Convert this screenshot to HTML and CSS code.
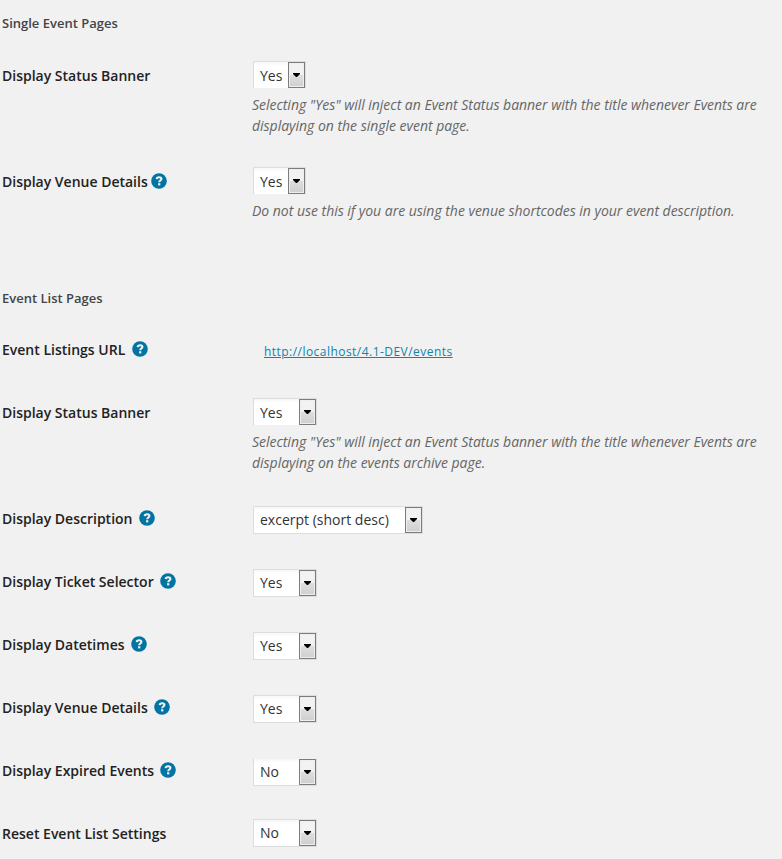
FILE: index.html
```html
<!DOCTYPE html>
<html lang="en">
<head>
<meta charset="utf-8">
<title>Event Settings</title>
<link rel="stylesheet" href="styles.css">
</head>
<body>
<svg class="defs" width="0" height="0" aria-hidden="true">
  <symbol id="help" viewBox="0 0 16 16">
    <circle cx="8" cy="8" r="7.8" fill="#0074a2"/>
    <path d="M5.7 6.1C5.8 4.7 6.7 4.2 8.1 4.2c1.5 0 2.3.6 2.3 1.7 0 1.6-2.2 1.6-2.2 3.3" fill="none" stroke="#f1f1f1" stroke-width="2.1"/>
    <rect x="7.1" y="10.2" width="2.2" height="2.2" fill="#f1f1f1"/>
  </symbol>
  <symbol id="arrow" viewBox="0 0 7 4"><path d="M0 0h7v1L4 4H3L0 1z" fill="#000"/></symbol>
</svg>
<main>
  <h4>Single Event Pages</h4>
  <section class="single">
    <div class="row described">
      <div class="label">Display Status Banner</div>
      <div class="field"><div class="select narrow open-bottom"><span>Yes</span><b><svg><use href="#arrow"/></svg></b></div>
        <p>Selecting "Yes" will inject an Event Status banner with the title whenever Events are<br>displaying on the single event page.</p></div>
    </div>
    <div class="row described">
      <div class="label tight">Display Venue Details<svg class="help"><use href="#help"/></svg></div>
      <div class="field"><div class="select narrow open-bottom"><span>Yes</span><b><svg><use href="#arrow"/></svg></b></div>
        <p>Do not use this if you are using the venue shortcodes in your event description.</p></div>
    </div>
  </section>
  <h4>Event List Pages</h4>
  <section class="list">
    <div class="row url">
      <div class="label">Event Listings URL<svg class="help"><use href="#help"/></svg></div>
      <div class="field"><a href="#">http://localhost/4.1-DEV/events</a></div>
    </div>
    <div class="row described tall">
      <div class="label">Display Status Banner</div>
      <div class="field"><div class="select open-bottom"><span>Yes</span><b><svg><use href="#arrow"/></svg></b></div>
        <p>Selecting "Yes" will inject an Event Status banner with the title whenever Events are<br>displaying on the events archive page.</p></div>
    </div>
    <div class="row">
      <div class="label">Display Description<svg class="help"><use href="#help"/></svg></div>
      <div class="field"><div class="select wide"><span>excerpt (short desc)</span><b><svg><use href="#arrow"/></svg></b></div></div>
    </div>
    <div class="row">
      <div class="label">Display Ticket Selector<svg class="help"><use href="#help"/></svg></div>
      <div class="field"><div class="select"><span>Yes</span><b><svg><use href="#arrow"/></svg></b></div></div>
    </div>
    <div class="row">
      <div class="label">Display Datetimes<svg class="help"><use href="#help"/></svg></div>
      <div class="field"><div class="select"><span>Yes</span><b><svg><use href="#arrow"/></svg></b></div></div>
    </div>
    <div class="row">
      <div class="label">Display Venue Details<svg class="help"><use href="#help"/></svg></div>
      <div class="field"><div class="select"><span>Yes</span><b><svg><use href="#arrow"/></svg></b></div></div>
    </div>
    <div class="row expired">
      <div class="label">Display Expired Events<svg class="help"><use href="#help"/></svg></div>
      <div class="field"><div class="select open-top"><span>No</span><b><svg><use href="#arrow"/></svg></b></div></div>
    </div>
    <div class="row reset">
      <div class="label">Reset Event List Settings</div>
      <div class="field"><div class="select"><span>No</span><b><svg><use href="#arrow"/></svg></b></div></div>
    </div>
  </section>
</main>
</body>
</html>
```

FILE: styles.css
```css
* { box-sizing: border-box; }
body {
  margin: 0;
  height: 859px;
  overflow: hidden;
  background: #f1f1f1;
  color: #222;
  font: 14px/28px "Open Sans", sans-serif;
}
.defs { display: block; }
main { padding: 13px 0 0 2px; }
h4 {
  margin: 0;
  height: 48px;
  color: #444;
  font-size: 13px;
  font-weight: 600;
  line-height: 20px;
}
.single { height: 227px; }
.row {
  display: grid;
  grid-template-columns: 250px 1fr;
  height: 63px;
}
.row.described { height: 106px; }
.row.tall { height: 108px; }
.row.url { height: 62px; padding-top: 1px; }
.row.expired { height: 61px; }
.label {
  display: flex;
  height: 28px;
  font-weight: 600;
  line-height: 26px;
  white-space: nowrap;
}
.described .label, .reset .label { line-height: 28px; padding-top: 1px; }
.help { width: 16px; height: 16px; margin: 4px 0 0 6.4px; }
.tight .help { margin: 5px 0 0 3px; }
.select {
  display: flex;
  justify-content: space-between;
  width: 64px;
  height: 28px;
  margin-left: 1px;
  border: 1px solid #ddd;
  background: linear-gradient(#f6f6f6, #fff 4px);
  color: #333;
  line-height: 26px;
}
.select.narrow { width: 53px; }
.select.wide { width: 170px; }
.select.open-bottom { border-bottom-color: #f1f1f1; line-height: 28px; }
.select.open-top { border-top-color: #f1f1f1; }
.select span { padding-left: 6px; }
.select b {
  display: grid;
  place-items: center;
  width: 17px;
  height: 26px;
  border: 1px solid #7c7c7c;
  box-shadow: inset 0 0 0 1px #eee;
  background: linear-gradient(#f2f2f2 50%, #dedede 50%, #cfcfcf);
}
.select b svg { width: 7px; height: 4px; }
p {
  margin: 5px 0 0;
  color: #666;
  font-size: 14px;
  font-style: italic;
  letter-spacing: -0.02px;
  line-height: 21px;
  white-space: nowrap;
}
a {
  margin-left: 12px;
  color: #0e83ad;
  font-size: 12px;
  letter-spacing: 0.46px;
  line-height: 30px;
}
```
